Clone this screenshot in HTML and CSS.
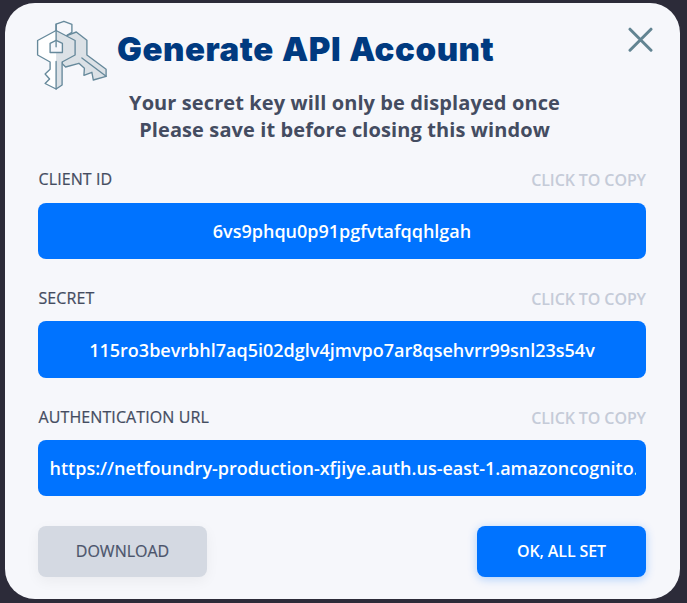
FILE: index.html
```html
<!DOCTYPE html>
<html lang="en">
<head>
<meta charset="utf-8">
<title>Generate API Account</title>
<link rel="stylesheet" href="styles.css">
</head>
<body>
<main class="modal">
  <header class="header">
    <svg class="keys" viewBox="0.4 0 72 72" width="72" height="72">
      <path d="M20.500 20V4.200L28.300 1.300l8 3v8l-5 3"/>
      <path class="shade" d="M31.300 15.700L40.700 12l10.600 8.300V35l19.200 14.300v7L57.700 60l-1.400-7.700-8 3 .5-7-5.500-5L30 47l-3.300-3.300V20z"/>
      <path class="front" d="M20.500 10.500L2 20.500V35l12.500 7v7.300L9.500 54l4.500 5-4.500 4.500 11 5.500z"/>
      <path class="shade-fill" d="M20.500 10.500l19 10V35l-13 7v23l-6 4z"/>
      <path d="M20.500 10.500l19 10V35l-13 7v23l-6 4-11-5.500L14 59l-4.500-5 5-4.700V42L2 35V20.500z"/>
      <path class="hole" d="M20.500 20.300l6.300 3V32.500H14.500v-9.200z"/>
      <path d="M20.500 4.200v22.500M20.500 41.500V69M46.300 38L70.500 56.300"/>
    </svg>
    <h1 class="title">Generate API Account</h1>
    <button class="close" aria-label="Close"><svg viewBox="0 0 26 26" width="26" height="26"><path d="M2 2.200L23 23.200M23 2.200L2 23.200"/></svg></button>
  </header>
  <p class="notice">Your secret key will only be displayed once<br>Please save it before closing this window</p>
  <section class="field">
    <div class="caption"><span class="label">CLIENT ID</span><span class="copy">CLICK TO COPY</span></div>
    <div class="value"><span class="value-text">6vs9phqu0p91pgfvtafqqhlgah</span></div>
  </section>
  <section class="field">
    <div class="caption"><span class="label">SECRET</span><span class="copy">CLICK TO COPY</span></div>
    <div class="value tall"><span class="value-text">115ro3bevrbhl7aq5i02dglv4jmvpo7ar8qsehvrr99snl23s54v</span></div>
  </section>
  <section class="field">
    <div class="caption"><span class="label">AUTHENTICATION URL</span><span class="copy">CLICK TO COPY</span></div>
    <div class="value"><span class="value-text url">https://netfoundry-production-xfjiye.auth.us-east-1.amazoncognito.</span></div>
  </section>
  <footer class="actions">
    <button class="button secondary">DOWNLOAD</button>
    <button class="button primary">OK, ALL SET</button>
  </footer>
</main>
</body>
</html>
```
FILE: styles.css
```css
* { box-sizing: border-box; }
body {
  margin: 0;
  height: 603px;
  padding: 3px 7px 4px 5px;
  overflow: hidden;
  background: #2c2b39;
  font-family: "Open Sans", sans-serif;
  color: #444c61;
}
.modal {
  height: 596px;
  padding: 17px 34px 0 33px;
  border-radius: 30px;
  background: #f6f7fb;
}
.header { display: flex; height: 70px; }
.keys { flex: none; margin-left: -2px; overflow: visible; }
.keys path { stroke: #66899b; stroke-width: 1.35; stroke-linejoin: round; stroke-linecap: round; fill: none; }
.keys .shade { fill: #dbe1e6; }
.keys .front { fill: #fff; stroke: none; }
.keys .shade-fill { fill: #dbe1e6; stroke: none; }
.keys .hole { fill: #f6f7fb; }
.title {
  flex: none;
  margin: 9px 0 0 9px;
  font: 900 33px/40px Inter, sans-serif;
  letter-spacing: .55px;
  word-spacing: 1px;
  color: #003a80;
  white-space: nowrap;
}
.close { margin: 7px -8px 0 auto; padding: 0; border: 0; background: none; width: 26px; height: 26px; }
.close svg { display: block; }
.close path { stroke: #628492; stroke-width: 3; stroke-linecap: round; }
.notice { margin: -1px 0 0; padding-left: 5px; height: 76px; text-align: center; font-weight: 700; font-size: 20px; letter-spacing: .1px; line-height: 27px; white-space: nowrap; }
.field { height: 119px; }
.caption { display: flex; justify-content: space-between; height: 38px; font-size: 16px; line-height: 28px; }
.field + .field .caption { height: 37px; }
.label { padding-left: .5px; font-weight: 500; letter-spacing: .1px; -webkit-text-stroke: .2px #444c61; }
.copy { color: #c5cbd8; font-weight: 600; letter-spacing: -.1px; padding-top: 1px; }
.value { height: 56px; padding: 0 12px; border-radius: 8px; background: #0073ff; text-align: center; }
.value-text { display: block; overflow: hidden; color: #fff; font-weight: 600; font-size: 18px; line-height: 56px; white-space: nowrap; }
.tall { height: 57px; }
.tall .value-text { line-height: 58px; }
.url { margin-right: -2px; text-align: left; text-indent: -.5px; }
.actions { display: flex; justify-content: space-between; margin-top: 4px; }
.button { width: 169px; height: 51px; padding: 0 0 2px; border: 0; border-radius: 8px; font: 500 16px "Open Sans", sans-serif; }
.secondary { background: #d4d9e2; color: #4b546b; box-shadow: 0 4px 14px rgba(0,0,0,.05); -webkit-text-stroke: .2px #4b546b; }
.primary { background: #0073ff; color: #fff; font-weight: 600; letter-spacing: -.1px; box-shadow: 0 2px 10px rgba(0,115,255,.3); }
```
